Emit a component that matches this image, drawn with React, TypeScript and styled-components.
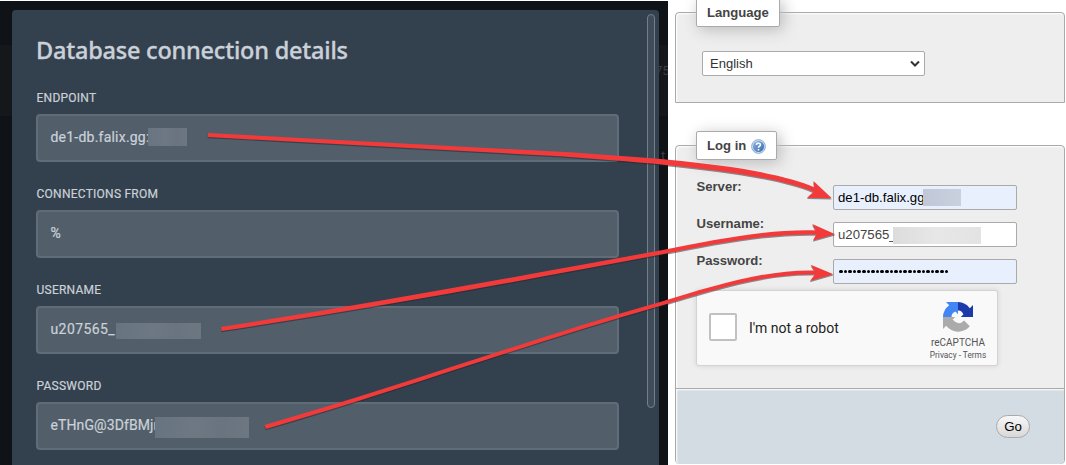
import React from "react";
import styled, { createGlobalStyle } from "styled-components";

const Global = createGlobalStyle`
  * { box-sizing: border-box; }
  body { margin: 0; background: #fff; overflow: hidden; }
`;

const Page = styled.main`
  position: relative;
  display: flex;
  width: 1066px;
  height: 465px;
  overflow: hidden;
  background: #fff;
  font-family: "Liberation Sans", Arial, sans-serif;
`;

const Backdrop = styled.section`
  position: relative;
  width: 668px;
  height: 464px;
  margin-top: 1px;
  padding: 9px 9px 0 12px;
  overflow: hidden;
  background: linear-gradient(#0f1317 44px, #14181b 44px, #14181b 115px, #0f1217 115px);
`;

const Ghost = styled.span<{ $top: number; $left: number }>`
  position: absolute;
  top: ${(p) => p.$top}px;
  left: ${(p) => p.$left}px;
  color: #3d3f42;
  font: 13px/16px Roboto, sans-serif;
`;

const Modal = styled.div`
  position: relative;
  display: flex;
  justify-content: space-between;
  height: 460px;
  padding: 4px 4px 0 24px;
  border-radius: 4px 4px 0 0;
  background: #33404d;
`;

const Details = styled.div`
  width: 583px;
`;

const Title = styled.h1`
  margin: 21px 0 25px;
  color: #cad1d8;
  font: 500 23.5px/30px "Noto Sans", sans-serif;
  letter-spacing: -0.22px;
  -webkit-text-stroke: 0.35px #cad1d8;
  white-space: nowrap;
`;

const Field = styled.div`
  height: 96px;
`;

const FieldLabel = styled.div`
  height: 24px;
  padding-left: 0.5px;
  color: #cad1d8;
  font: 12px/16px Roboto, sans-serif;
  letter-spacing: 0.25px;
  -webkit-text-stroke: 0.2px #cad1d8;
`;

const FieldBox = styled.div<{ $spacing: number }>`
  display: flex;
  align-items: center;
  height: 48px;
  padding: 0 12.5px 2px;
  border: 2px solid #606d79;
  border-radius: 4px;
  background: #525f6b;
  color: #cad1d8;
  font: 14px/20px Roboto, sans-serif;
  letter-spacing: ${(p) => p.$spacing}px;
  -webkit-text-stroke: 0.2px #cad1d8;
`;

const FieldText = styled.span<{ $width?: number }>`
  width: ${(p) => (p.$width ? `${p.$width}px` : "auto")};
  flex: none;
  white-space: nowrap;
`;

const Mask = styled.span<{ $w: number; $h: number; $fill: string; $shift?: number }>`
  position: relative;
  flex: none;
  width: ${(p) => p.$w}px;
  height: ${(p) => p.$h}px;
  margin-top: ${(p) => p.$shift ?? 0}px;
  background: ${(p) => p.$fill};
`;

const ScrollThumb = styled.div`
  width: 8px;
  height: 394px;
  border: 1px solid #71808c;
  border-radius: 4px;
  background: #404d59;
`;

const LoginColumn = styled.section`
  width: 390px;
  margin-left: 7px;
  padding-top: 12px;
`;

const Panel = styled.div<{ $h: number; $radius: string; $gap?: number }>`
  position: relative;
  height: ${(p) => p.$h}px;
  margin-top: ${(p) => p.$gap ?? 0}px;
  border: 1px solid #aaa;
  border-radius: ${(p) => p.$radius};
  background: #eee;
  box-shadow: inset 1px 1px 2px #fff;
`;

const Legend = styled.div<{ $w: number; $h: number; $lift?: number }>`
  position: absolute;
  top: -15px;
  left: 20px;
  display: flex;
  align-items: center;
  gap: 5px;
  width: ${(p) => p.$w}px;
  height: ${(p) => p.$h}px;
  padding: 0 0 ${(p) => p.$lift ?? 0}px 10px;
  border: 1px solid #aaa;
  border-radius: 2px;
  background: #fff;
  box-shadow: 3px 3px 15px #bbb;
  color: #444;
  font-size: 13.1px;
  font-weight: bold;
`;

const SelectBox = styled.div`
  display: flex;
  align-items: center;
  justify-content: space-between;
  width: 223px;
  height: 25px;
  margin: 38px 0 0 26px;
  padding: 0 4px 0 7px;
  border: 1px solid #aaa;
  border-radius: 2px;
  background: #fff;
  color: #333;
  font-size: 13px;
`;

const Form = styled.div`
  height: 242px;
  padding: 39px 0 0 20px;
`;

const FormRow = styled.div`
  display: flex;
  height: 37px;
`;

const FormLabel = styled.label`
  width: 137px;
  padding-left: 0.5px;
  color: #444;
  font-size: 13.1px;
  font-weight: bold;
  line-height: 16px;
  margin-top: -6px;
`;

const Input = styled.div<{ $filled?: boolean }>`
  display: flex;
  align-items: center;
  width: 184px;
  height: 25px;
  padding-left: 4px;
  border: 1px solid #aaa;
  border-radius: 2px;
  background: ${(p) => (p.$filled ? "#e8f0fe" : "#fff")};
  color: ${(p) => (p.$filled ? "#000" : "#444")};
  font-size: 13.2px;
`;

const Dots = styled.div`
  display: flex;
  gap: 1px;
  padding-left: 1px;
`;

const Dot = styled.i`
  width: 3.6px;
  height: 3.6px;
  border-radius: 50%;
  background: #000;
`;

const Captcha = styled.div`
  display: flex;
  align-items: center;
  width: 302px;
  height: 76px;
  margin-top: -6px;
  padding-left: 12px;
  border: 1px solid #d3d3d3;
  border-radius: 3px;
  background: #f9f9f9;
  box-shadow: 0 0 4px 1px rgba(0, 0, 0, 0.08);
  font-family: Roboto, sans-serif;
`;

const CheckBox = styled.span`
  width: 28px;
  height: 28px;
  margin-top: -2px;
  border: 2px solid #c1c1c1;
  border-radius: 2px;
  background: #fff;
`;

const CaptchaText = styled.span`
  width: 184px;
  padding-left: 12px;
  color: #222;
  font-size: 14px;
`;

const Brand = styled.div`
  display: flex;
  flex-direction: column;
  align-items: center;
  width: 74px;
  padding-top: 6px;
  color: #555;
  font-size: 10px;
  line-height: 13px;
  white-space: nowrap;
`;

const BrandName = styled.span`
  margin-top: 3px;
`;

const Terms = styled.small`
  font-size: 8.3px;
  line-height: 13px;
`;

const Footer = styled.div`
  display: flex;
  align-items: center;
  justify-content: flex-end;
  height: 76px;
  padding-right: 34px;
  border-top: 1px solid #aaa;
  border-radius: 0 0 4px 4px;
  background: #d3dce3;
  box-shadow: inset 1px 1px 2px #fff;
`;

const GoButton = styled.button`
  width: 34px;
  height: 23px;
  padding: 0;
  border: 1px solid #aaa;
  border-radius: 12px;
  background: linear-gradient(#f8f8f8, #d8d8d8);
  color: #000;
  font: 13.3px "Liberation Sans", Arial, sans-serif;
`;

const Overlay = styled.svg`
  position: absolute;
  inset: 0;
  pointer-events: none;
`;

const HelpMark = styled.svg`
  margin-top: 2px;
`;

const greyMask = "linear-gradient(90deg, #687480, #6d7883 45%, #697480 70%, #6c7781)";

const fields = [
  { label: "ENDPOINT", value: "de1-db.falix.gg:", spacing: 0.22, width: 97.5, mask: [39, 18, 0] },
  { label: "CONNECTIONS FROM", value: "%", spacing: 0 },
  { label: "USERNAME", value: "u207565_", spacing: 0.4, width: 65.5, mask: [85, 16, 3] },
  { label: "PASSWORD", value: "eTHnG@3DfBMjr", spacing: 0.1, width: 104.5, mask: [94, 21, 5] },
];

const arrows = [
  {
    line: "M208 133 L560 151.8 C660 158 767 166 816 188 L813.5 192 C763 171 650 163 560 156.3 L208 137Z",
    head: "M813.5 181 L831.8 198.3 L807 197.7 L814.5 191Z",
  },
  {
    line: "M221 327 C370 304 520 276 660 250.5 C720 239 767 229 817 230.5 L817 234.5 C767 233.5 720 243 660 254.8 C520 281 370 309 221.5 331Z",
    head: "M812.3 224 L835.3 234.3 L813 240.5 L817 233Z",
  },
  {
    line: "M264.5 425 C400 386 530 339 660 302 C714 286 765 269 816 270.5 L816 274.5 C765 273 714 290 660 306 C530 343 400 390 266 429Z",
    head: "M810.7 264.7 L833.5 274.3 L810 281 L816 273Z",
  },
];

function HelpIcon() {
  return (
    <HelpMark width="15" height="15" viewBox="0 0 14 14">
      <defs>
        <linearGradient id="help" x1="0" y1="0" x2="1" y2="1">
          <stop offset="0" stopColor="#8fb6e2" />
          <stop offset="1" stopColor="#3569ae" />
        </linearGradient>
      </defs>
      <circle cx="7" cy="7" r="6.4" fill="#d5e4f5" stroke="#7da4d0" strokeWidth="0.9" />
      <circle cx="7" cy="7" r="5.2" fill="url(#help)" />
      <path d="M5 5.5C5.2 3.3 9 3.4 8.8 5.6C8.7 6.7 7 6.8 7 8.2M7 9.3V10.7" fill="none" stroke="#fff" strokeWidth="1.5" />
    </HelpMark>
  );
}

function CaptchaLogo() {
  return (
    <svg width="32" height="32" viewBox="0 0 32 32">
      <path d="M31 16V4L27.8 7.2A15 15 0 0 0 16 1V9.6Q19.6 9.1 21.4 13.5L18.8 16Z" fill="#1c3aa9" />
      <path d="M16 1H4L7.2 4.2A15 15 0 0 0 1 16H9.6Q9.2 12.5 13.5 10.6L16 13.2Z" fill="#4285f4" />
      <path d="M1 16V28L4.2 24.8A15 15 0 0 0 27.8 25.2L22.1 19.5Q16.5 25.5 10.6 18.6L13.2 16Z" fill="#ababab" />
    </svg>
  );
}

export default function App() {
  return (
    <Page>
      <Global />
      <Backdrop>
        <Ghost $top={62} $left={655}>75</Ghost>
        <Ghost $top={147} $left={661}>t</Ghost>
        <Modal>
          <Details>
            <Title>Database connection details</Title>
            {fields.map((f) => (
              <Field key={f.label}>
                <FieldLabel>{f.label}</FieldLabel>
                <FieldBox $spacing={f.spacing}>
                  <FieldText $width={f.width}>{f.value}</FieldText>
                  {f.mask && <Mask $w={f.mask[0]} $h={f.mask[1]} $shift={f.mask[2]} $fill={greyMask} />}
                </FieldBox>
              </Field>
            ))}
          </Details>
          <ScrollThumb />
        </Modal>
      </Backdrop>
      <LoginColumn>
        <Panel $h={91} $radius="4px 4px 0 0">
          <Legend $w={84} $h={29}>Language</Legend>
          <SelectBox>
            English
            <svg width="10" height="8" viewBox="0 0 10 8">
              <path d="M1 1.5L5 5.5L9 1.5" fill="none" stroke="#333" strokeWidth="2" />
            </svg>
          </SelectBox>
        </Panel>
        <Panel $h={319} $radius="4px" $gap={42}>
          <Legend $w={81} $h={29} $lift={1}>
            Log in
            <HelpIcon />
          </Legend>
          <Form>
            <FormRow>
              <FormLabel>Server:</FormLabel>
              <Input $filled>
                <FieldText $width={85}>de1-db.falix.gg</FieldText>
                <Mask $w={38} $h={17} $fill="linear-gradient(90deg, #c0c7d6, #c9d0de)" />
              </Input>
            </FormRow>
            <FormRow>
              <FormLabel>Username:</FormLabel>
              <Input>
                <FieldText $width={55}>u207565_</FieldText>
                <Mask $w={88} $h={17} $shift={2} $fill="linear-gradient(90deg, #dcdcdc, #e7e7e7 50%, #e3e3e3)" />
              </Input>
            </FormRow>
            <FormRow>
              <FormLabel>Password:</FormLabel>
              <Input $filled>
                <Dots>
                  {Array.from({ length: 24 }, (_, i) => (
                    <Dot key={i} />
                  ))}
                </Dots>
              </Input>
            </FormRow>
            <Captcha>
              <CheckBox />
              <CaptchaText>I'm not a robot</CaptchaText>
              <Brand>
                <CaptchaLogo />
                <BrandName>reCAPTCHA</BrandName>
                <Terms>Privacy - Terms</Terms>
              </Brand>
            </Captcha>
          </Form>
          <Footer>
            <GoButton>Go</GoButton>
          </Footer>
        </Panel>
      </LoginColumn>
      <Overlay width="1066" height="465" viewBox="0 0 1066 465">
        {arrows.map((a) => (
          <g key={a.head}>
            <path d={`${a.line} ${a.head}`} fill="#20252b" opacity="0.5" transform="translate(-0.2 1.2)" />
            <path d={a.line} fill="#f33a3a" />
            <path d={a.head} fill="#f33a3a" />
          </g>
        ))}
      </Overlay>
    </Page>
  );
}
